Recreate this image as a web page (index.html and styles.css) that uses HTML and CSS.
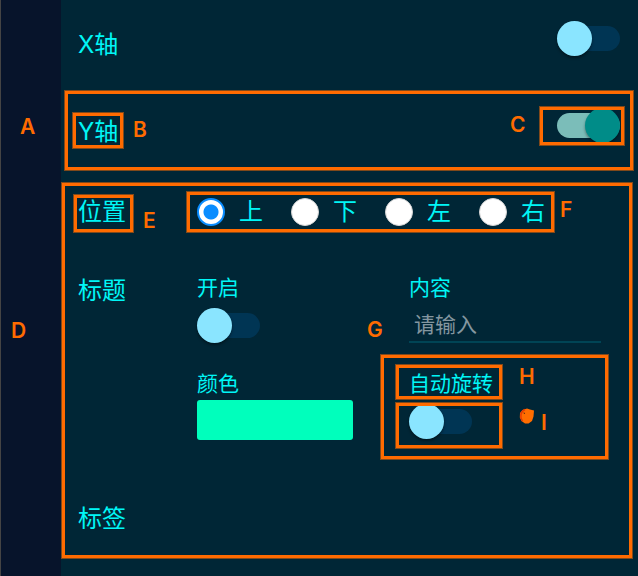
FILE: index.html
```html
<!DOCTYPE html>
<html lang="zh-CN">
<head>
<meta charset="utf-8">
<meta name="viewport" content="width=device-width, initial-scale=1">
<title>坐标轴</title>
<link rel="stylesheet" href="styles.css">
</head>
<body>
<div class="rail"></div>
<main class="panel">
  <div class="axis">
    <label class="name" for="x-axis">X轴</label>
    <span class="anchor"><input class="switch" type="checkbox" id="x-axis"></span>
  </div>

  <div class="axis">
    <span class="anchor">
      <label class="name" for="y-axis">Y轴</label>
      <i class="frame frame-b"></i><b class="mark mark-b">B</b>
    </span>
    <span class="anchor">
      <input class="switch" type="checkbox" id="y-axis" checked>
      <i class="frame frame-c"></i><b class="mark mark-c">C</b>
    </span>
    <i class="frame frame-a"></i><b class="mark mark-a">A</b>
  </div>

  <section class="settings">
    <div class="row">
      <span class="anchor">
        <span class="name" id="pos">位置</span>
        <i class="frame frame-e"></i><b class="mark mark-e">E</b>
      </span>
      <div class="radios anchor" role="radiogroup" aria-labelledby="pos">
        <label class="option"><input class="radio" type="radio" name="pos" checked>上</label>
        <label class="option"><input class="radio" type="radio" name="pos">下</label>
        <label class="option"><input class="radio" type="radio" name="pos">左</label>
        <label class="option"><input class="radio" type="radio" name="pos">右</label>
        <i class="frame frame-f"></i><b class="mark mark-f">F</b>
      </div>
    </div>

    <div class="row">
      <span class="name">标题</span>
      <div class="fields">
        <div class="field">
          <label class="caption" for="title-on">开启</label>
          <input class="switch" type="checkbox" id="title-on">
        </div>
        <div class="field">
          <label class="caption" for="title-text">内容</label>
          <input class="text" type="text" id="title-text" placeholder="请输入">
        </div>
        <div class="field">
          <label class="caption" for="title-color">颜色</label>
          <button class="swatch" type="button" id="title-color"></button>
        </div>
        <div class="field">
          <label class="caption" for="title-rotate">自动旋转</label>
          <input class="switch" type="checkbox" id="title-rotate">
          <i class="frame frame-g"></i><b class="mark mark-g">G</b>
          <i class="frame frame-h"></i><b class="mark mark-h">H</b>
          <i class="frame frame-i"></i><b class="mark mark-i">I</b>
          <svg class="blob" viewBox="0 0 16 16" aria-hidden="true">
            <path d="M8 .5 11 1.500l4 1-.5 6-1.500 4.500-3.500 2.500H6L2.500 13 .8 9.500 1 5 3.500 2Z" fill="#ff6d00"/>
            <path d="M6 1.500C1.500 3.500 .5 9 3.500 13" fill="none" stroke="#e83a00" stroke-width="1.500"/>
            <path d="M5 4.500 5.500 6" stroke="#5c2512" stroke-width="1"/>
          </svg>
        </div>
      </div>
    </div>

    <div class="row">
      <span class="name">标签</span>
    </div>
    <i class="frame frame-d"></i><b class="mark mark-d">D</b>
  </section>
</main>
</body>
</html>
```
FILE: styles.css
```css
* { box-sizing: border-box; }

body {
  margin: 0;
  min-height: 100vh;
  display: flex;
  background: #002636;
  color: #00f6f6;
  font-family: Inter, "Noto Sans CJK SC", sans-serif;
  font-size: 24px;
}

.rail {
  flex: 0 0 61px;
  background: #07142b;
  border-left: 1px solid #444;
}

.panel { flex: 1; min-width: 0; }

.axis {
  position: relative;
  display: flex;
  justify-content: space-between;
  align-items: flex-start;
  height: 87px;
  padding: 20px 18px 0 17px;
}

.anchor { position: relative; display: flex; }

.name { display: block; line-height: 50px; white-space: nowrap; }

.settings {
  position: relative;
  display: grid;
  gap: 29px;
  padding: 13px 17px;
}

.row {
  display: grid;
  grid-template-columns: 119px 1fr;
  align-items: start;
}

.row .anchor { justify-self: start; }

.radios { gap: 28px; }

.option {
  display: flex;
  align-items: center;
  gap: 14px;
  line-height: 50px;
}

.radio {
  appearance: none;
  width: 28px;
  height: 28px;
  margin: 0;
  border: 1px solid #d5d5d5;
  border-radius: 50%;
  background: #fff;
}

.radio:checked {
  border: 2px solid #0a8dff;
  background: radial-gradient(circle, #0a8dff 7px, #fff 8px);
}

.fields {
  display: grid;
  grid-template-columns: 1fr 1fr;
  row-gap: 25px;
  padding: 6px 0 25px;
}

.field { position: relative; }

.caption {
  display: block;
  width: max-content;
  margin-bottom: 3px;
  font-size: 21px;
  line-height: 32px;
}

.switch {
  appearance: none;
  position: relative;
  display: block;
  width: 63px;
  height: 36px;
  margin: 0;
}

.switch::before {
  content: "";
  position: absolute;
  inset: 6px 0 5px;
  border-radius: 13px;
  background: #003554;
}

.switch::after {
  content: "";
  position: absolute;
  top: 1px;
  left: 0;
  width: 35px;
  height: 35px;
  border-radius: 50%;
  background: #8ae5ff;
  box-shadow: 0 2px 3px rgba(0, 0, 0, .4);
}

.switch:checked::before { background: #7bbdb9; }
.switch:checked::after { left: auto; right: 0; background: #008c88; }

.text {
  display: block;
  width: calc(100% - 20px);
  height: 36px;
  padding: 0 5px;
  border: 0;
  border-bottom: 2px solid #004455;
  background: none;
  color: inherit;
  font: inherit;
  font-size: 21px;
}

.text::placeholder { color: #8496a0; }

.swatch {
  display: block;
  width: 156px;
  height: 40px;
  margin-top: -3px;
  border: 0;
  border-radius: 3px;
  background: #00ffbc;
}

/* Annotation layer: frames and letters drawn over the form */
.frame {
  position: absolute;
  border: 1px solid rgba(255, 107, 0, .5);
  box-shadow: inset 0 0 0 3px #ff6b00;
  pointer-events: none;
}

.mark {
  position: absolute;
  color: #ff6b00;
  font: 600 21px/20px Inter, sans-serif;
}

.frame-a { inset: 3px 4px 3px 3px; }
.frame-b { inset: 5px -6px 8px -6px; }
.frame-c { inset: -1px -5px -3px -18px; }
.frame-d { inset: 8px 5px auto 0; height: 377px; }
.frame-e { inset: 7px -8px 4px -5px; }
.frame-f { inset: 4px -10px 4px -11px; }
.frame-g { inset: -14px 12px auto -29px; height: 106px; }
.frame-h { top: -4px; left: -14px; width: 108px; height: 36px; }
.frame-i { top: 34px; left: -14px; width: 108px; height: 47px; }

.mark-a { top: 30px; left: -41px; }
.mark-b { top: 13px; left: 55px; }
.mark-c { top: 8px; left: -47px; }
.mark-d { top: 147px; left: -50px; }
.mark-e { top: 24px; left: 65px; }
.mark-f { top: 13px; left: 363px; }
.mark-g { top: -48px; left: -42px; }
.mark-h { top: -1px; left: 110px; }
.mark-i { top: 45px; left: 132px; }

.blob {
  position: absolute;
  top: 40px;
  left: 110px;
  width: 16px;
  height: 16px;
}
```
